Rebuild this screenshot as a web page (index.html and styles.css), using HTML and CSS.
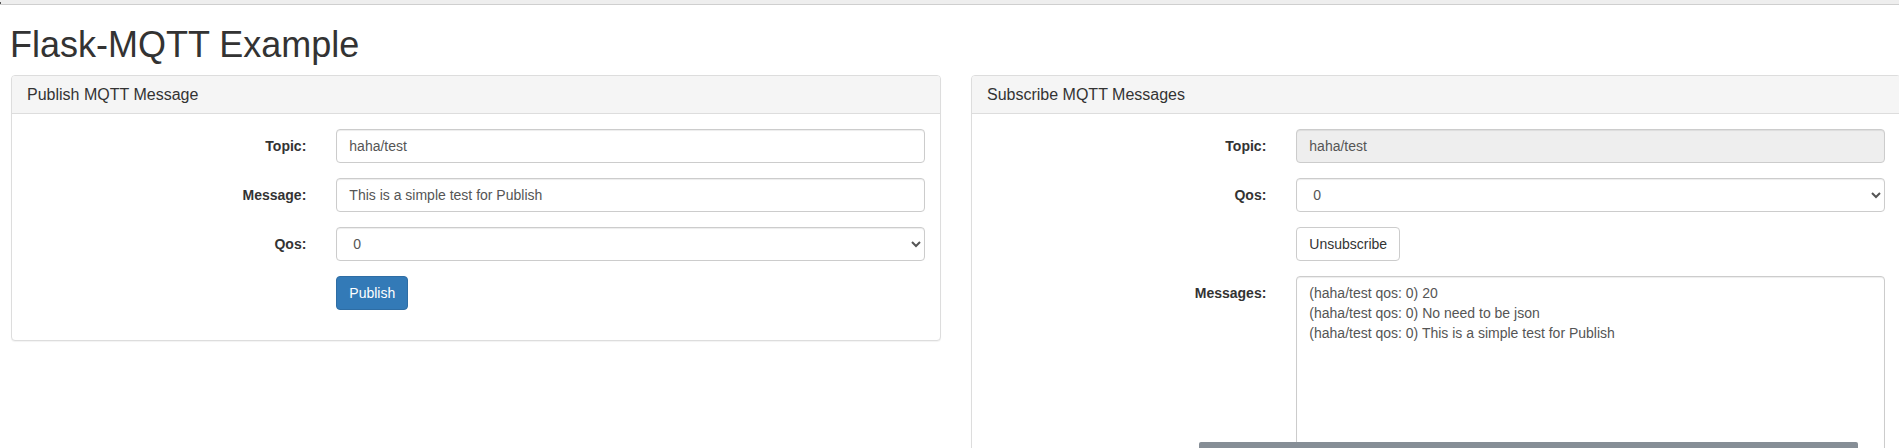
FILE: index.html
```html
<!DOCTYPE html>
<html lang="en">
<head>
<meta charset="utf-8">
<title>Flask-MQTT Example</title>
<link rel="stylesheet" href="styles.css">
</head>
<body>
<div class="topbar"><span class="topbar-mark"></span></div>
<div class="page">
  <h1 class="title">Flask-MQTT Example</h1>
  <div class="columns">
    <div class="panel">
      <div class="panel-heading"><h3 class="panel-title">Publish MQTT Message</h3></div>
      <div class="panel-body">
        <form class="form">
          <div class="form-group">
            <label class="form-label">Topic:</label>
            <div class="form-field"><input class="form-control" type="text" value="haha/test"></div>
          </div>
          <div class="form-group">
            <label class="form-label">Message:</label>
            <div class="form-field"><input class="form-control" type="text" value="This is a simple test for Publish"></div>
          </div>
          <div class="form-group">
            <label class="form-label">Qos:</label>
            <div class="form-field"><select class="form-control"><option>0</option><option>1</option><option>2</option></select></div>
          </div>
          <div class="form-group">
            <div class="form-field form-offset"><button type="button" class="btn btn-primary">Publish</button></div>
          </div>
        </form>
      </div>
    </div>
    <div class="panel panel-tall">
      <div class="panel-heading"><h3 class="panel-title">Subscribe MQTT Messages</h3></div>
      <div class="panel-body">
        <form class="form">
          <div class="form-group">
            <label class="form-label">Topic:</label>
            <div class="form-field"><input class="form-control" type="text" value="haha/test" disabled></div>
          </div>
          <div class="form-group">
            <label class="form-label">Qos:</label>
            <div class="form-field"><select class="form-control"><option>0</option><option>1</option><option>2</option></select></div>
          </div>
          <div class="form-group">
            <div class="form-field form-offset"><button type="button" class="btn btn-default">Unsubscribe</button></div>
          </div>
          <div class="form-group">
            <label class="form-label">Messages:</label>
            <div class="form-field"><textarea class="form-control messages">(haha/test qos: 0) 20
(haha/test qos: 0) No need to be json
(haha/test qos: 0) This is a simple test for Publish</textarea></div>
          </div>
        </form>
      </div>
    </div>
  </div>
</div>
<div class="bottom-thumb"></div>
</body>
</html>
```
FILE: styles.css
```css
html, body {
  margin: 0;
  padding: 0;
  overflow: hidden;
  background: #fff;
}
body {
  font-family: "Liberation Sans", Arial, sans-serif;
  font-size: 14px;
  line-height: 1.42857143;
  color: #333;
}
* { box-sizing: border-box; }

.topbar {
  height: 5px;
  background: #eeeeee;
  border-bottom: 1px solid #cfcfcf;
  display: flex;
  align-items: flex-start;
}
.topbar-mark {
  width: 1px;
  height: 2px;
  margin-top: 2px;
  background: #555;
}

.page {
  padding-left: 10px;
  overflow: hidden;
}
.title {
  margin: 20px 0 10px;
  font-size: 36px;
  font-weight: 500;
  line-height: 1.1;
  color: #333;
}
.columns {
  margin-left: 1px;
  display: grid;
  grid-template-columns: 930px 930px;
  column-gap: 30px;
  align-items: start;
}

.panel {
  background: #fff;
  border: 1px solid #ddd;
  border-radius: 4px;
  box-shadow: 0 1px 1px rgba(0,0,0,.05);
  margin-bottom: 20px;
}
.panel-heading {
  padding: 10px 15px;
  background: #f5f5f5;
  border-bottom: 1px solid #ddd;
  border-top-left-radius: 3px;
  border-top-right-radius: 3px;
}
.panel-title {
  margin: 0;
  font-size: 16px;
  font-weight: 500;
  line-height: 1.1;
  color: inherit;
}
.panel-body {
  padding: 15px;
}
.form { margin: 0; }
.form-group {
  display: grid;
  grid-template-columns: 1fr 2fr;
  margin: 0 -15px 15px;
}
.form-label {
  padding: 7px 15px 0;
  text-align: right;
  font-weight: 700;
  margin: 0;
}
.form-field {
  padding: 0 15px;
}
.form-offset {
  grid-column: 2;
}
.form-control {
  display: block;
  width: 100%;
  height: 34px;
  padding: 6px 12px;
  font-family: inherit;
  font-size: 14px;
  line-height: 1.42857143;
  color: #555;
  background: #fff;
  border: 1px solid #ccc;
  border-radius: 4px;
  box-shadow: inset 0 1px 1px rgba(0,0,0,.075);
  margin: 0;
}
.form-control:disabled {
  background: #eee;
  opacity: 1;
  color: #555;
}
.messages {
  height: 320px;
  resize: vertical;
}
.btn {
  display: inline-block;
  padding: 6px 12px;
  font-family: inherit;
  font-size: 14px;
  line-height: 1.42857143;
  border: 1px solid transparent;
  border-radius: 4px;
  cursor: pointer;
  margin: 0;
}
.btn-primary {
  color: #fff;
  background: #337ab7;
  border-color: #2e6da4;
}
.btn-default {
  color: #333;
  background: #fff;
  border-color: #ccc;
}
.bottom-thumb {
  position: fixed;
  left: 1199px;
  bottom: 0;
  width: 659px;
  height: 6px;
  background: #868e96;
  border-radius: 2px 2px 0 0;
}
```
